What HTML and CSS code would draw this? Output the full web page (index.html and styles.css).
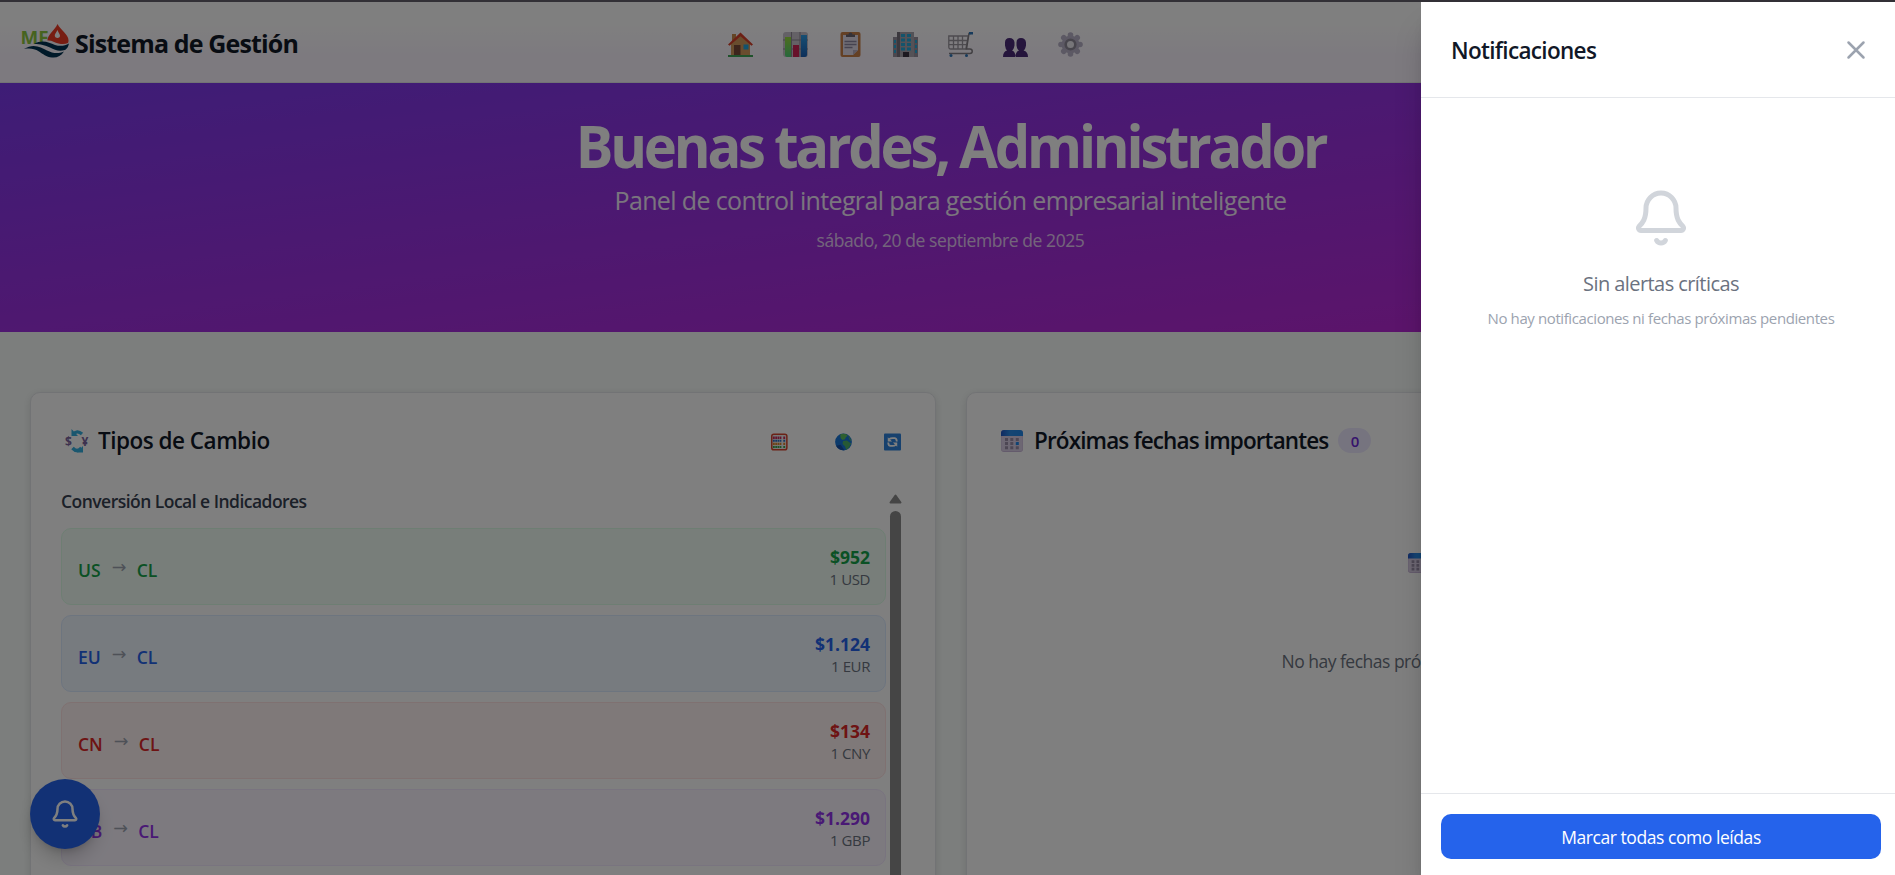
FILE: index.html
```html
<!DOCTYPE html>
<html lang="es">
<head>
<meta charset="utf-8">
<title>Sistema de Gestión</title>
<link rel="stylesheet" href="styles.css">
</head>
<body>
<svg class="defs" aria-hidden="true">
  <defs>
    <symbol id="bell" viewBox="0 0 24 24"><g fill="none" stroke="currentColor" stroke-width="2" stroke-linecap="round" stroke-linejoin="round"><path d="M10.268 21a2 2 0 0 0 3.464 0"/><path d="M3.262 15.326A1 1 0 0 0 4 17h16a1 1 0 0 0 .74-1.673C19.41 13.956 18 12.499 18 8A6 6 0 0 0 6 8c0 4.499-1.411 5.956-2.738 7.326"/></g></symbol>
    <linearGradient id="calTop" x1="0" x2="1"><stop offset="0" stop-color="#2156c4"/><stop offset=".4" stop-color="#2a8be6"/><stop offset="1" stop-color="#1e86e8"/></linearGradient>
    <symbol id="calendar" viewBox="0 0 22 22"><rect width="22" height="22" rx="3" fill="#c9b6d8"/><rect x=".4" y="5" width="21.2" height="16" rx="2.6" fill="#dacfe6"/><path d="M0 6V3a3 3 0 0 1 3-3h16a3 3 0 0 1 3 3v3z" fill="url(#calTop)"/><g fill="#9a8fa8"><path d="M4 8h3v3H4zM9.300 8h3v3h-3zM14.800 8h3v3h-3zM4 12.100h3v3H4zM9.300 12.100h3v3h-3zM4 16.200h3v3H4zM9.300 16.200h3v3h-3zM14.800 16.200h3v3h-3z"/></g><path d="M14.800 12.100h3v3h-3z" fill="#1e86e8"/></symbol>
    <linearGradient id="gBar" y2="1" x2="0"><stop offset="0" stop-color="#9bdc3c"/><stop offset="1" stop-color="#4fd07a"/></linearGradient>
    <linearGradient id="bBar" y2="1" x2="0"><stop offset="0" stop-color="#2f9ee6"/><stop offset="1" stop-color="#1c5fb4"/></linearGradient>
  </defs>
</svg>
<div class="topline"></div>
<div class="page">
  <header class="nav">
    <div class="brand">
      <svg class="logo" viewBox="0 0 48 36">
        <text x="-.5" y="20" class="logo-text" textLength="28" lengthAdjust="spacingAndGlyphs">MF</text>
        <path d="M36.500 0C34 6 26 11.500 26.500 16.500c4-.5 7 2 11 3 3.500.9 7 .8 9.500-.5C50 12 40 7 36.500 0z" fill="#ef3b24"/>
        <path d="M36.500 6c-1.500 3-3 4-2.700 6 .4 2.500 5 2.500 5.200 0 .2-2-1.500-3-2.500-6z" fill="#fff"/>
        <path d="M13 20c9-5 15-1 21 1 6 1.700 10 .6 14-1.500-1 4-2 5-4 6.500-6 2-10 0-15-2.500-5-2.300-9-3.500-16-3.500z" fill="#003252"/>
        <path d="M3 25c9-6 17-2 23 1.500 6 3 11 3.500 17 1-3 4.500-7 6.500-12 6-6-.5-9-3.500-13-6-5-3-9-3.500-15-2.500z" fill="#003252"/>
      </svg>
      <span class="brand-name">Sistema de Gestión</span>
    </div>
    <nav class="links">
      <svg viewBox="0 0 25 25"><path d="M4 2h4v9H4z" fill="#c98a4b"/><path d="M3 11l9.500-8L22 11v12H3z" fill="#d39a5c"/><path d="M0 12.500L12.500.5 25 12.500l-1.500 1.200L12.500 4.300 1.500 13.700z" fill="#d9402a"/><path d="M6 13h6.500v10H6z" fill="#7b4a38"/><path d="M15.500 12.500h5v5h-5z" fill="#23a5dc"/><path d="M0 23h25v2H0z" fill="#3fa456"/></svg>
      <svg viewBox="0 0 25 25"><rect width="25" height="25" rx="3" fill="#c8c2cc"/><path d="M8.500 0v25M17 0v25M0 8h25M0 17h25" stroke="#8e8894" stroke-width="1"/><path d="M2 5h6v20H4q-2 0-2-2z" fill="url(#gBar)"/><path d="M10 13h6v12h-6z" fill="#cf2557"/><path d="M18 3h6v20q0 2-2 2h-4z" fill="url(#bBar)"/></svg>
      <svg viewBox="0 0 25 25"><rect x="2.500" width="20" height="25" rx="2" fill="#c98049"/><path d="M5 3h15v15l-5 5H5z" fill="#e2dcea"/><path d="M15 23v-5h5z" fill="#b9b0c4"/><path d="M8 5V2.500h2.500a2 2 0 0 1 4 0H17V5z" fill="#6b6470"/><path d="M6.500 9.500h12M6.500 12.500h12M6.500 15.500h8" stroke="#8d86a0" stroke-width="1.300"/></svg>
      <svg viewBox="0 0 25 25"><path d="M0 5h5v20H0zM20 5h5v20h-5z" fill="#97909e"/><path d="M4 0h17v25H4z" fill="#a9a4ae"/><path d="M4 0h3v25H4z" fill="#77717d"/><path d="M8 2h4v3H8zM14 2h4v3h-4zM8 6.500h4v3H8zM14 6.500h4v3h-4zM8 11h4v3H8zM14 11h4v3h-4zM8 15.500h4v3H8zM14 15.500h4v3h-4zM1 8h2v3H1zM1 13h2v3H1zM1 18h2v3H1zM22 8h2v3h-2zM22 13h2v3h-2zM22 18h2v3h-2z" fill="#27a9d8"/><path d="M10 20h6v5h-6z" fill="#3a3340"/></svg>
      <svg viewBox="0 0 25 25"><g fill="none" stroke="#9b969f" stroke-width="1.300"><path d="M.8 4h19.500l-2.500 13H2.800Q.8 17 .8 15zM5.500 4v13M10 4v13M14.500 4v13M1 8.500h18.500M1 12.700h17.500"/></g><path d="M23 1.500h-2L18.500 17H22a2 2 0 0 1 0 4.500H1" fill="none" stroke="#858087" stroke-width="1.500"/><path d="M21 0h4v2.500h-4z" fill="#2e76b8"/><circle cx="3" cy="23.500" r="1.500" fill="#2e76b8"/><circle cx="18.500" cy="23.500" r="1.500" fill="#2e76b8"/></svg>
      <svg viewBox="0 0 25 25"><g fill="#4a2a78"><path d="M2 10.500Q2 6 6.500 6t5 4.500v3q-1 4.500-2.500 5 3.500 1 3.500 6.500H0q0-5.500 4-6.500Q2.500 17 2 13.500zM13.500 10.500Q13.500 6 18 6t5 4.500v3q-1 4.500-2.500 5 4.500 1 4.500 6.500H12.500q0-5.500 3.500-6.500-2-1-2.500-5z"/></g></svg>
      <svg viewBox="0 0 25 25"><g fill="#b9b2c8"><circle cx="12.500" cy="12.500" r="9"/><g id="teeth"><circle cx="12.500" cy="3" r="2.800"/><circle cx="12.500" cy="22" r="2.800"/><circle cx="3" cy="12.500" r="2.800"/><circle cx="22" cy="12.500" r="2.800"/></g><use href="#teeth" transform="rotate(45 12.500 12.500)"/></g><circle cx="12.500" cy="12.500" r="4.800" fill="#efedf3" stroke="#8f8a98" stroke-width="2.600"/></svg>
    </nav>
  </header>
  <section class="hero">
    <h1>Buenas tardes, Administrador</h1>
    <p class="lead">Panel de control integral para gestión empresarial inteligente</p>
    <p class="date">sábado, 20 de septiembre de 2025</p>
  </section>
  <main class="cards">
    <section class="card">
      <div class="card-head">
        <svg class="exchange" viewBox="0 0 24 24"><path d="M8 5.500Q12 .5 17 5M16.500 19Q12 24 7.500 19" fill="none" stroke="#35aede" stroke-width="3.400"/><path d="M6.500 0v7h6.500zM18 17v6.500h-6.500z" fill="#35aede"/><text x="0" y="16.500" class="sign">$</text><text x="16.500" y="17" class="sign">¥</text></svg>
        <h2 class="rates-title">Tipos de Cambio</h2>
        <div class="tools">
          <svg viewBox="0 0 18 18"><rect x=".8" y=".8" width="16" height="16.500" rx="2.200" fill="#eee" stroke="#d6452c" stroke-width="1.600"/><path d="M2 4.500h9M13 4.500h2.500" stroke="#c72a5b" stroke-width="2.400" stroke-dasharray="2 .5"/><path d="M2 7.700h9M13 7.700h2.500" stroke="#2e6fc4" stroke-width="2.200" stroke-dasharray="2 .5"/><path d="M2 11h9M13 11h2.500" stroke="#dd8428" stroke-width="2.200" stroke-dasharray="2 .5"/><path d="M2 14.300h9M13 14.300h2.500" stroke="#3fa34d" stroke-width="2.200" stroke-dasharray="2 .5"/></svg>
          <svg viewBox="0 0 18 18" class="globe"><circle cx="9" cy="9" r="8.900" fill="#1976d8"/><path d="M1 13Q4 18 10 17.800L6 12z" fill="#1650a8"/><path d="M5.500 1Q8-.2 12 .8l1.500 1.700-2 1.500-1 2-2.500 1L6 5z" fill="#5cc05e"/><path d="M8.500 8l4-.5 4.500 3-2 4-3 3-1.500-4-2.500-2.500z" fill="#4fb36a"/><path d="M14 2.500q3 2.500 3.500 6L15.500 7z" fill="#4fb36a"/></svg>
          <svg viewBox="0 0 18 18"><rect width="18" height="18" rx="1" fill="#2f83dc"/><path d="M5.500 6Q7 4.800 9 4.800h2.500Q13.500 5 13.500 8.500M4.500 9.500Q4.500 13 7 13.200h2q2 0 3.500-1.200" fill="none" stroke="#fff" stroke-width="1.900"/><path d="M4 4v4.500h4.500zM14 14V9.500H9.500z" fill="#fff"/></svg>
        </div>
      </div>
      <div class="scroller">
        <div class="rates">
          <h3>Conversión Local e Indicadores</h3>
          <div class="rate usd"><div class="pair"><b>US</b><i>→</i><b>CL</b></div><div class="value"><strong>$952</strong><small>1 USD</small></div></div>
          <div class="rate eur"><div class="pair"><b>EU</b><i>→</i><b>CL</b></div><div class="value"><strong>$1.124</strong><small>1 EUR</small></div></div>
          <div class="rate cny"><div class="pair"><b>CN</b><i>→</i><b>CL</b></div><div class="value"><strong>$134</strong><small>1 CNY</small></div></div>
          <div class="rate gbp"><div class="pair"><b>GB</b><i>→</i><b>CL</b></div><div class="value"><strong>$1.290</strong><small>1 GBP</small></div></div>
        </div>
        <div class="bar"><svg viewBox="0 0 13 10"><path d="M6.500 1.500L11.500 8.500H1.500z" fill="#8b8b8b" stroke="#8b8b8b" stroke-width="2" stroke-linejoin="round"/></svg><div class="thumb"></div></div>
      </div>
    </section>
    <section class="card">
      <div class="card-head">
        <svg class="cal"><use href="#calendar"/></svg>
        <h2 class="dates-title">Próximas fechas importantes</h2>
        <span class="badge">0</span>
      </div>
      <div class="empty">
        <svg><use href="#calendar"/></svg>
        <p>No hay fechas próximas pendientes</p>
      </div>
    </section>
  </main>
  <button class="fab" aria-label="Notificaciones"><svg><use href="#bell"/></svg></button>
  <div class="overlay"></div>
  <aside class="panel">
    <div class="panel-head"><h2>Notificaciones</h2><svg viewBox="0 0 24 24" fill="none" stroke="#9ca3af" stroke-width="2" stroke-linecap="round"><path d="M18 6L6 18M6 6l12 12"/></svg></div>
    <div class="panel-body">
      <svg><use href="#bell"/></svg>
      <p class="none">Sin alertas críticas</p>
      <p class="detail">No hay notificaciones ni fechas próximas pendientes</p>
    </div>
    <div class="panel-foot"><button class="mark">Marcar todas como leídas</button></div>
  </aside>
</div>
</body>
</html>
```
FILE: styles.css
```css
* { box-sizing: border-box; margin: 0; padding: 0; }
html, body { height: 100%; overflow: hidden; }
body { font-family: "Open Sans", "Noto Sans", sans-serif; font-size: 20px; color: #111827; background: #f9fdfb; white-space: nowrap; }
svg { display: block; flex: none; }
button { border: 0; font: inherit; }
.defs { position: absolute; width: 0; height: 0; }
.topline { height: 2px; width: 1901px; background: #323036; }
.page { position: relative; width: 1901px; height: 877px; overflow: hidden; background: #f9fdfb; }

.nav { height: 81px; border-bottom: 1px solid #e5e7eb; background: linear-gradient(to bottom, #fff 25%, #faf4ff 70%); display: flex; align-items: center; }
.brand { display: flex; align-items: center; gap: 6px; width: 728px; padding-left: 21px; }
.logo { width: 48px; height: 36px; }
.logo-text { font: 700 18px "Open Sans", sans-serif; fill: #8cc63f; }
.brand-name { font-size: 25px; font-weight: 700; line-height: 34px; letter-spacing: -.85px; padding-top: 2px; }
.links { display: flex; gap: 30px; padding-top: 5px; }
.links svg { width: 25px; height: 25px; }

.hero { height: 249px; background: linear-gradient(to bottom right, #7c3aed, #c026d3); color: #fff; text-align: center; padding-top: 25px; }
.hero h1 { font-size: 59px; line-height: 75px; font-weight: 700; letter-spacing: -3.35px; transform: scaleX(.95); }
.lead { font-size: 25px; line-height: 35px; letter-spacing: -.64px; opacity: .9; }
.date { margin-top: 10px; font-size: 17.5px; line-height: 25px; letter-spacing: -.42px; opacity: .75; }

.cards { display: grid; grid-template-columns: 906px 906px; gap: 30px; padding: 60px 30px 0; }
.card { height: 700px; background: #fff; border: 1px solid #e5e7eb; border-radius: 10px; padding: 30px; box-shadow: 0 2px 8px rgba(0,0,0,.12); }
.card-head { display: flex; align-items: center; height: 36px; }
.card h2 { font-size: 22.5px; font-weight: 600; line-height: 36px; }
.card .rates-title { letter-spacing: -.5px; }
.card .dates-title { letter-spacing: -.87px; }
.exchange { width: 24px; height: 24px; margin: 0 9px 0 4px; }
.sign { font: 700 12px "Open Sans", sans-serif; fill: #7b659e; }
.tools { display: flex; margin-left: auto; align-items: center; padding: 1px 4px 0 0; }
.tools svg { width: 17px; height: 18px; }
.tools .globe { margin: 0 32px 0 47px; }
.scroller { display: flex; margin-top: 32px; }
.rates { width: 825px; }
.rates h3 { font-size: 17.5px; font-weight: 600; line-height: 21px; letter-spacing: -.53px; color: #374151; margin-bottom: 16px; }
.rate { display: flex; justify-content: space-between; height: 77px; margin-bottom: 10px; border: 1px solid; border-radius: 10px; padding: 16px 15px 14px 16px; }
.usd { background: #f0fdf4; border-color: #dcfce7; color: #16a34a; }
.eur { background: #eff6ff; border-color: #dbeafe; color: #2563eb; }
.cny { background: #fef2f2; border-color: #fee2e2; color: #dc2626; }
.gbp { background: #faf5ff; border-color: #f3e8ff; color: #9333ea; }
.pair { display: flex; padding-top: 12px; line-height: 26px; }
.pair b { font-size: 17.5px; font-weight: 600; }
.pair i { width: 15px; margin: 0 10px 0 11px; font: normal 17.5px/21px "DejaVu Sans", sans-serif; color: #9ca3af; }
.value { text-align: right; }
.value strong { display: block; font-size: 17.5px; line-height: 25px; font-weight: 700; }
.value small { display: block; font-size: 15px; line-height: 19px; letter-spacing: -.4px; color: #6b7280; }
.bar { width: 13px; margin-left: 3px; padding-top: 3px; }
.bar svg { width: 13px; height: 10px; }
.thumb { width: 11px; height: 400px; margin: 7px 0 0 1px; border-radius: 6px; background: #8b8b8b; }
.cal { width: 22px; height: 22px; margin: 0 11px 0 4px; }
.badge { margin: -1px 0 0 10px; width: 33px; height: 25px; border-radius: 13px; background: #ede9fe; color: #6d28d9; font-size: 15px; font-weight: 600; line-height: 26px; text-align: center; }
.empty { display: flex; flex-direction: column; align-items: center; padding-top: 94px; color: #6b7280; font-size: 17.5px; letter-spacing: -.5px; }
.empty svg { width: 20px; height: 20px; margin-right: 3px; }
.empty p { margin-top: 75px; line-height: 26px; }

.fab { position: absolute; left: 30px; top: 777px; width: 70px; height: 70px; border-radius: 50%; background: #2563eb; color: #fff; padding: 20px; box-shadow: 0 12px 19px -4px rgba(0,0,0,.2), 0 5px 8px -5px rgba(0,0,0,.2); }
.fab svg { width: 30px; height: 30px; }
.overlay { position: absolute; inset: 0; background: rgba(0,0,0,.5); }
.panel { position: absolute; top: 0; right: 0; width: 480px; height: 877px; background: #fff; display: flex; flex-direction: column; box-shadow: 0 25px 31px -6px rgba(0,0,0,.2), 0 10px 13px -8px rgba(0,0,0,.2); }
.panel-head { display: flex; align-items: center; justify-content: space-between; height: 96px; padding: 0 30px; border-bottom: 1px solid #e5e7eb; }
.panel-head h2 { font-size: 22.5px; font-weight: 600; letter-spacing: -.67px; padding-top: 1px; }
.panel-head svg { width: 30px; height: 30px; }
.panel-body { flex: 1; display: flex; flex-direction: column; align-items: center; padding-top: 90px; }
.panel-body svg { width: 60px; height: 60px; color: #d1d5db; }
.none { margin-top: 21px; font-size: 20px; line-height: 30px; letter-spacing: -.57px; color: #6b7280; }
.detail { margin-top: 9px; font-size: 15px; line-height: 20px; letter-spacing: -.4px; color: #9ca3af; }
.panel-foot { border-top: 1px solid #e5e7eb; padding: 20px; }
.mark { display: block; width: 100%; height: 45px; border-radius: 10px; background: #2563eb; color: #fff; font-size: 17.5px; line-height: 45px; letter-spacing: -.44px; padding-top: 1px; }
```
